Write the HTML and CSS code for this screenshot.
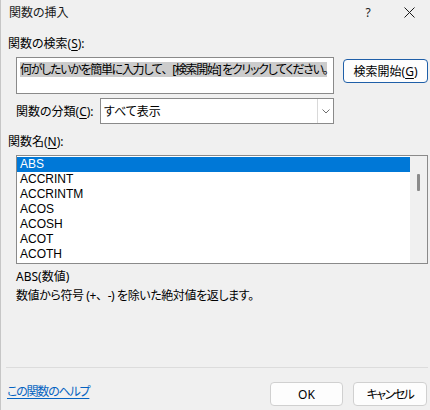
FILE: index.html
```html
<!DOCTYPE html>
<html lang="ja">
<head>
<meta charset="utf-8">
<title>関数の挿入</title>
<link rel="stylesheet" href="styles.css">
</head>
<body>
<div class="titlebar">
  <span class="title">関数の挿入</span>
  <span class="help">?</span>
  <svg class="close" width="11" height="11" viewBox="0 0 11 11"><path d="M0.5 0.5 L10.5 10.5 M10.5 0.5 L0.5 10.5" stroke="#1a1a1a" stroke-width="1" fill="none"/></svg>
</div>

<div class="label top-label">関数の検索(<u>S</u>):</div>
<div class="search-row">
  <div class="textbox"><span class="sel">何がしたいかを簡単に入力して<span class="fw">、</span>[検索開始] をクリックしてください。</span></div>
  <div class="btn btn-focus">検索開始(<u>G</u>)</div>
</div>

<div class="cat-row">
  <span class="cat-label">関数の分類(<u>C</u>):</span>
  <div class="combo">
    <span class="combo-text">すべて表示</span>
    <span class="combo-arrow"><svg width="8" height="5" viewBox="0 0 8 5"><path d="M0.5 0.5 L4 4 L7.5 0.5" stroke="#6e6e6e" stroke-width="1" fill="none"/></svg></span>
  </div>
</div>

<div class="label name-label">関数名(<u>N</u>):</div>
<div class="listbox">
  <div class="rows">
    <div class="row selected">ABS</div>
    <div class="row">ACCRINT</div>
    <div class="row">ACCRINTM</div>
    <div class="row">ACOS</div>
    <div class="row">ACOSH</div>
    <div class="row">ACOT</div>
    <div class="row">ACOTH</div>
  </div>
  <div class="scrollbar"><div class="thumb"></div></div>
</div>

<div class="desc">
  <div class="desc-line">ABS(数値)</div>
  <div class="desc-line second">数値から符号 (+<span class="fw">、</span>-) を除いた絶対値を返します。</div>
</div>

<div class="footer">
  <a class="help-link" href="#">この関数のヘルプ</a>
  <div class="btn btn-ok">OK</div>
  <div class="btn btn-cancel"><span class="cancel-text">キャンセル</span></div>
</div>
</body>
</html>
```

FILE: styles.css
```css
* { box-sizing: border-box; }
html, body { margin: 0; padding: 0; }
body {
  width: 430px;
  height: 410px;
  overflow: hidden;
  background: #f0f0f0;
  border-left: 1px solid #c6c6c6;
  font-family: "Noto Sans", "Noto Sans CJK JP", sans-serif;
  font-size: 12px;
  line-height: 15px;
  font-feature-settings: "palt";
  color: #000;
  display: flex;
  flex-direction: column;
}
u { text-decoration: underline; text-underline-offset: 2px; }
.fw { font-feature-settings: normal; }

.titlebar {
  height: 25px;
  display: flex;
  align-items: center;
  padding-left: 8px;
}
.title { flex: 1; color: #1a1a1a; }
.help { width: 8px; margin-right: 32px; text-align: center; color: #1a1a1a; }
.close { margin-right: 15px; }

.label { padding-left: 7px; height: 15px; }
.top-label { margin-top: 11px; }

.search-row {
  margin-top: 6px;
  padding-left: 15px;
  display: flex;
  align-items: flex-start;
}
.textbox {
  width: 318px;
  height: 37px;
  background: #fff;
  border: 1px solid #8a8a8a;
  padding: 4px 0 0 3px;
  white-space: nowrap;
  overflow: hidden;
}
.sel {
  background: #cccccc;
  display: inline-block;
  height: 15px;
  letter-spacing: -1.3px;
}

.btn {
  display: flex;
  align-items: center;
  justify-content: center;
  background: #fdfdfd;
  border: 1px solid #d0d0d0;
  border-radius: 4px;
  height: 24px;
  white-space: nowrap;
}
.btn-focus {
  margin-left: 9px;
  margin-top: 2px;
  width: 85px;
  border-color: #1f5fa8;
}

.cat-row {
  margin-top: 4px;
  padding-left: 15px;
  display: flex;
  align-items: center;
  height: 26px;
}
.cat-label { width: 84px; }
.combo {
  width: 234px;
  height: 26px;
  background: #fff;
  border: 1px solid #8a8a8a;
  display: flex;
  align-items: center;
}
.combo-text { flex: 1; padding-left: 3px; }
.combo-arrow {
  width: 16px;
  height: 24px;
  border-left: 1px solid #d9d9d9;
  display: flex;
  align-items: center;
  justify-content: center;
}

.name-label { margin-top: 10px; }

.listbox {
  margin-top: 6px;
  margin-left: 15px;
  width: 412px;
  height: 109px;
  border: 1px solid #8a8a8a;
  background: #fff;
  display: flex;
}
.rows { flex: 1; padding-top: 1px; }
.row {
  height: 15px;
  padding-left: 3px;
  line-height: 15px;
  font-family: "Liberation Sans", "Noto Sans", sans-serif;
}
.row.selected { background: #0078d7; color: #fff; }
.scrollbar {
  width: 17px;
  background: #f0f0f0;
  padding: 18px 0 0 7px;
}
.thumb { width: 3px; height: 17px; background: #8b8b8b; border-radius: 1px; }

.desc { padding-left: 15px; margin-top: 5px; }
.desc-line.second { margin-top: 4px; letter-spacing: -0.4px; }

.footer {
  margin-top: auto;
  margin-left: 5px;
  margin-right: 2px;
  height: 43px;
  border-top: 1px solid #dcdcdc;
  padding-top: 14px;
  display: flex;
  align-items: flex-start;
}
.help-link {
  margin-left: 1px;
  margin-top: 2px;
  color: #0563c1;
  text-decoration: underline;
  text-underline-offset: 2px;
  letter-spacing: -1.2px;
}
.btn-ok { margin-left: auto; width: 73px; }
.btn-cancel { margin-left: 10px; margin-right: 1px; width: 74px; }
.cancel-text { letter-spacing: -1.5px; }
```
